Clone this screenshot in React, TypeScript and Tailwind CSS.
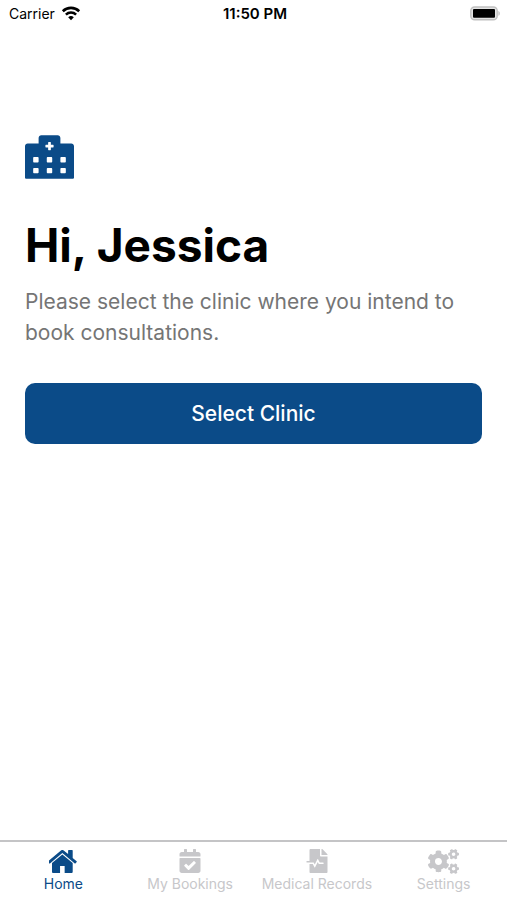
import type { ReactNode } from 'react';
import { FaCalendarCheck, FaCogs, FaFileMedicalAlt, FaHospitalAlt } from 'react-icons/fa';
import { clsx } from 'clsx';

interface TabItemProps {
  label: string;
  icon: ReactNode;
  active?: boolean;
}

function TabItem({ label, icon, active = false }: TabItemProps) {
  return (
    <li className="min-w-0 flex-1">
      <a
        href="#"
        aria-current={active ? 'page' : undefined}
        className={clsx(
          'flex flex-col items-center gap-[3px] pt-[7px] text-sm leading-4 whitespace-nowrap',
          active ? 'text-[#0b4b88]' : 'text-[#c7c7ca]'
        )}
      >
        <span className="flex h-6 items-center">{icon}</span>
        {label}
      </a>
    </li>
  );
}

function HomeIcon() {
  return (
    <svg className="h-[23px] w-[29px]" viewBox="96 256 1600 1280" fill="currentColor" aria-hidden="true">
      <path d="M1408 992v480q0 26-19 45t-45 19h-384v-384h-256v384h-384q-26 0-45-19t-19-45v-480q0-1 .5-3t.5-3l575-474 575 474q1 2 1 6zm223-69l-62 74q-8 9-21 11h-3q-13 0-21-7l-692-577-692 577q-12 8-24 7-13-2-21-11l-62-74q-8-10-7-23.5t11-21.5l719-599q32-26 76-26t76 26l244 204v-195q0-14 9-23t23-9h192q14 0 23 9t9 23v408l219 182q10 8 11 21.5t-7 23.5z" />
    </svg>
  );
}

function WifiIcon() {
  return (
    <svg className="h-4 w-5" viewBox="0 0 20 16" fill="none" stroke="currentColor" strokeWidth="2.6" aria-hidden="true">
      <path d="M1.8 5.2a11.8 11.8 0 0 1 16.4 0" />
      <path d="M4.9 8.6a7.4 7.4 0 0 1 10.2 0" />
      <path d="M10 14.2l-2.8-3a4.2 4.2 0 0 1 5.6 0z" fill="currentColor" stroke="none" />
    </svg>
  );
}

function BatteryIcon() {
  return (
    <svg className="h-4 w-8" viewBox="0 0 32 16" aria-hidden="true">
      <rect x="1.8" y="1" width="26.4" height="12.8" rx="3.8" fill="#e4e4e4" stroke="#c0c0c0" strokeWidth="1.4" />
      <rect x="4" y="3" width="22" height="8.8" rx="1" fill="#000" />
      <path d="M29.4 5v4.8c1.9-.6 1.9-4.2 0-4.8z" fill="#c0c0c0" />
    </svg>
  );
}

function StatusBar() {
  return (
    <header className="grid grid-cols-3 items-center pt-1 pr-1.5 pl-[9px] text-sm leading-5">
      <div className="flex items-center gap-1.5">
        Carrier
        <WifiIcon />
      </div>
      <time className="text-center text-[15px] font-semibold">11:50 PM</time>
      <div className="flex justify-end">
        <BatteryIcon />
      </div>
    </header>
  );
}

export default function App() {
  return (
    <div className="flex min-h-screen flex-col bg-white font-['Inter',sans-serif] text-black">
      <StatusBar />
      <main className="flex-1 px-[25px] pt-[111px]">
        <FaHospitalAlt className="h-11 w-[49px] text-[#0b4b88]" />
        <h1 className="mt-[42px] text-[46px] leading-12 font-bold">Hi, Jessica</h1>
        <p className="mt-[17px] text-[21px] leading-[31px] text-[#757575]">
          Please select the clinic where you intend to book consultations.
        </p>
        <button
          type="button"
          className="mt-[35px] h-[61px] w-full rounded-[10px] bg-[#0b4b88] text-[21px] font-medium text-white"
        >
          Select Clinic
        </button>
      </main>
      <nav className="border-t-2 border-[#c4c4c6] pb-2" aria-label="Main">
        <ul className="flex">
          <TabItem active label="Home" icon={<HomeIcon />} />
          <TabItem label="My Bookings" icon={<FaCalendarCheck className="size-6" />} />
          <TabItem label="Medical Records" icon={<FaFileMedicalAlt className="size-6" />} />
          <TabItem label="Settings" icon={<FaCogs className="size-[31px]" />} />
        </ul>
      </nav>
    </div>
  );
}
